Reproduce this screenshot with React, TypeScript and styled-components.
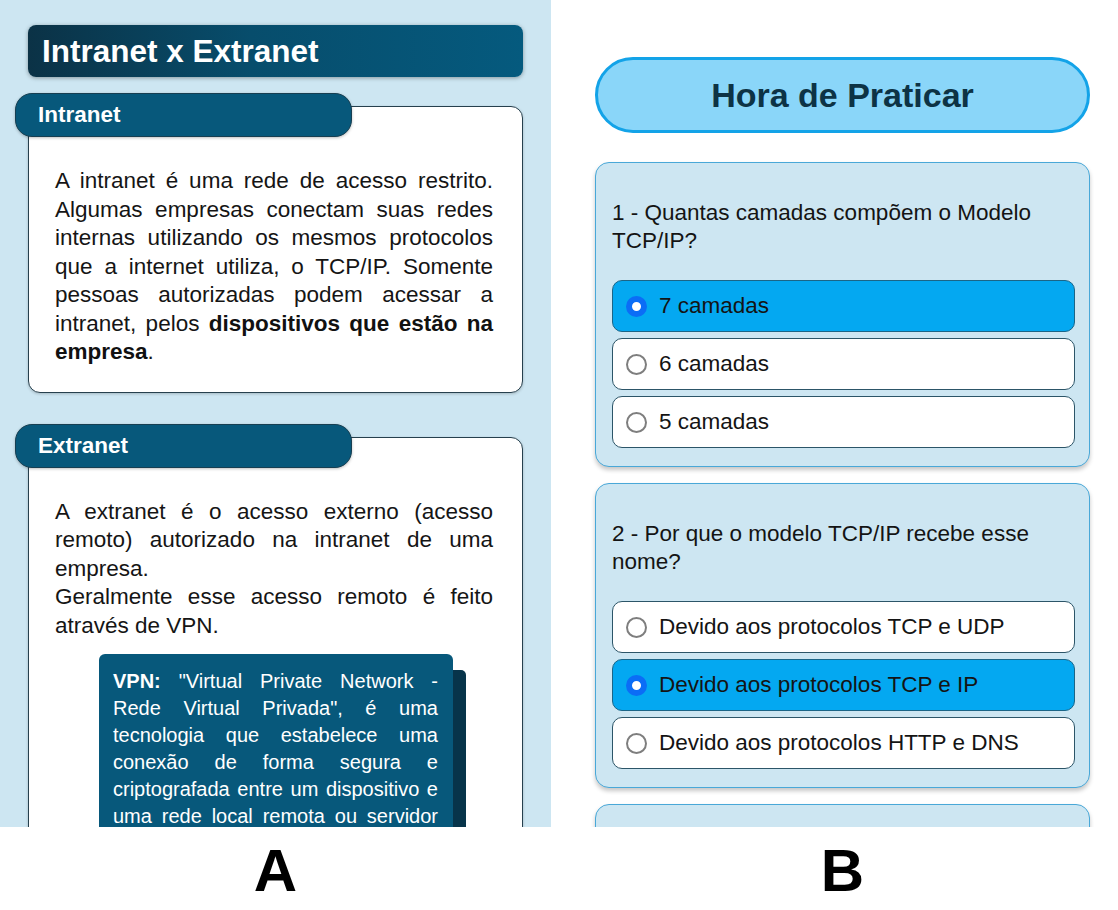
import styled, { createGlobalStyle } from "styled-components";

const GlobalStyle = createGlobalStyle`
  body {
    margin: 0;
    background: #ffffff;
    font-family: "Liberation Sans", Arial, sans-serif;
  }
`;

type Choice = { text: string; checked?: boolean };
type Quiz = { question: string; options: Choice[] };

const quizzes: Quiz[] = [
  {
    question: "1 - Quantas camadas compõem o Modelo TCP/IP?",
    options: [
      { text: "7 camadas", checked: true },
      { text: "6 camadas" },
      { text: "5 camadas" },
    ],
  },
  {
    question: "2 - Por que o modelo TCP/IP recebe esse nome?",
    options: [
      { text: "Devido aos protocolos TCP e UDP" },
      { text: "Devido aos protocolos TCP e IP", checked: true },
      { text: "Devido aos protocolos HTTP e DNS" },
    ],
  },
];

const App = () => {
  return (
    <Page>
      <GlobalStyle />
      <Panels>
        <TheoryPanel>
          <TitleBar>Intranet x Extranet</TitleBar>

          <Section>
            <Tab>Intranet</Tab>
            <Card>
              <Paragraph>
                A intranet é uma rede de acesso restrito. Algumas empresas
                conectam suas redes internas utilizando os mesmos protocolos
                que a internet utiliza, o TCP/IP. Somente pessoas autorizadas
                podem acessar a intranet, pelos{" "}
                <b>dispositivos que estão na empresa</b>.
              </Paragraph>
            </Card>
          </Section>

          <Section>
            <Tab>Extranet</Tab>
            <Card>
              <Paragraph>
                A extranet é o acesso externo (acesso remoto) autorizado na
                intranet de uma empresa.
              </Paragraph>
              <Paragraph>
                Geralmente esse acesso remoto é feito através de VPN.
              </Paragraph>
              <VpnBox>
                <b>VPN:</b> "Virtual Private Network - Rede Virtual Privada", é
                uma tecnologia que estabelece uma conexão de forma segura e
                criptografada entre um dispositivo e uma rede local remota ou
                servidor privado.
              </VpnBox>
            </Card>
          </Section>
        </TheoryPanel>

        <PracticePanel>
          <PracticeHeader>Hora de Praticar</PracticeHeader>
          {quizzes.map((quiz) => (
            <QuestionCard key={quiz.question}>
              <Question>{quiz.question}</Question>
              <Options>
                {quiz.options.map((option) => (
                  <Option key={option.text} $checked={option.checked}>
                    <Radio $checked={option.checked} />
                    {option.text}
                  </Option>
                ))}
              </Options>
            </QuestionCard>
          ))}
          <QuestionCard />
        </PracticePanel>
      </Panels>

      <Labels>
        <Label $width={551} $left={28} $right={28}>
          A
        </Label>
        <Label $width={567} $left={44} $right={28}>
          B
        </Label>
      </Labels>
    </Page>
  );
};

export default App;

const Page = styled.div`
  width: 1118px;
  display: flex;
  flex-direction: column;
`;

const Panels = styled.div`
  display: flex;
  height: 827px;
  overflow: hidden;
`;

const TheoryPanel = styled.div`
  width: 551px;
  flex-shrink: 0;
  box-sizing: border-box;
  background: #cde6f2;
  padding: 25px 28px 0 28px;
  display: flex;
  flex-direction: column;
  gap: 16px;
`;

const TitleBar = styled.div`
  flex-shrink: 0;
  height: 52px;
  border-radius: 8px;
  background: linear-gradient(90deg, #0b3246 0%, #074d6c 45%, #055a7e 100%);
  box-shadow: 0 1px 4px rgba(0, 0, 0, 0.35);
  color: #ffffff;
  font-weight: bold;
  font-size: 31.5px;
  display: flex;
  align-items: center;
  padding-left: 14px;
`;

const Section = styled.div`
  flex-shrink: 0;
  display: flex;
  flex-direction: column;
  margin-bottom: 15px;
`;

const Tab = styled.div`
  position: relative;
  z-index: 1;
  width: 337px;
  height: 44px;
  box-sizing: border-box;
  margin-left: -13px;
  border-radius: 17px;
  background: #07587b;
  border: 1.5px solid #173f52;
  box-shadow: 0 1px 3px rgba(0, 0, 0, 0.25);
  color: #ffffff;
  font-weight: bold;
  font-size: 22.5px;
  display: flex;
  align-items: center;
  padding-left: 22px;
`;

const Card = styled.div`
  margin-top: -31px;
  background: #ffffff;
  border: 1.5px solid #26404e;
  border-radius: 12px;
  box-shadow: 0 1px 3px rgba(0, 0, 0, 0.2);
  padding: 60px 29px 25px 26px;
  color: #151515;
`;

const Paragraph = styled.p`
  margin: 0;
  font-size: 22.5px;
  line-height: 28.5px;
  text-align: justify;

  b {
    color: #111111;
  }
`;

const VpnBox = styled.div`
  width: 354px;
  box-sizing: border-box;
  margin: 14px 0 0 44px;
  background: #07587b;
  border-radius: 6px;
  box-shadow: 14px 15px 0 -1px #07344a;
  padding: 14px 15px 20px 14px;
  color: #ffffff;
  font-size: 20px;
  line-height: 27px;
  text-align: justify;
`;

const PracticePanel = styled.div`
  flex: 1;
  background: #ffffff;
  padding: 57px 28px 0 44px;
  display: flex;
  flex-direction: column;
  gap: 16px;
`;

const PracticeHeader = styled.div`
  flex-shrink: 0;
  height: 76px;
  box-sizing: border-box;
  margin-bottom: 13px;
  border-radius: 38px;
  background: #8ad6f9;
  border: 3px solid #13a3e8;
  color: #0d3345;
  font-weight: bold;
  font-size: 34px;
  display: flex;
  align-items: center;
  justify-content: center;
`;

const QuestionCard = styled.div`
  flex-shrink: 0;
  height: 305px;
  box-sizing: border-box;
  background: #cde6f2;
  border: 1.5px solid #49a8d8;
  border-radius: 14px;
  box-shadow: 0 3px 4px rgba(0, 0, 0, 0.22);
  padding: 36px 14px 0 16px;
`;

const Question = styled.div`
  font-size: 22.5px;
  line-height: 28px;
  color: #141414;
  margin-bottom: 25px;
`;

const Options = styled.div`
  display: flex;
  flex-direction: column;
  gap: 6px;
`;

const Option = styled.div<{ $checked?: boolean }>`
  height: 52px;
  box-sizing: border-box;
  border-radius: 10px;
  border: 1.5px solid ${(p) => (p.$checked ? "#1b6587" : "#2c5568")};
  background: ${(p) => (p.$checked ? "#04a8f1" : "#ffffff")};
  display: flex;
  align-items: center;
  gap: 12px;
  padding-left: 13px;
  font-size: 22.5px;
  color: #141414;
`;

const Radio = styled.span<{ $checked?: boolean }>`
  width: 21px;
  height: 21px;
  box-sizing: border-box;
  border-radius: 50%;
  flex-shrink: 0;
  background: #ffffff;
  border: ${(p) => (p.$checked ? "6.5px solid #0b6df6" : "2px solid #7e7e7e")};
`;

const Labels = styled.div`
  display: flex;
  height: 83px;
  background: #ffffff;
`;

const Label = styled.div<{ $width: number; $left: number; $right: number }>`
  width: ${(p) => p.$width}px;
  box-sizing: border-box;
  padding: 14px ${(p) => p.$right}px 0 ${(p) => p.$left}px;
  text-align: center;
  font-size: 60px;
  line-height: 1;
  font-weight: bold;
  color: #000000;
`;
